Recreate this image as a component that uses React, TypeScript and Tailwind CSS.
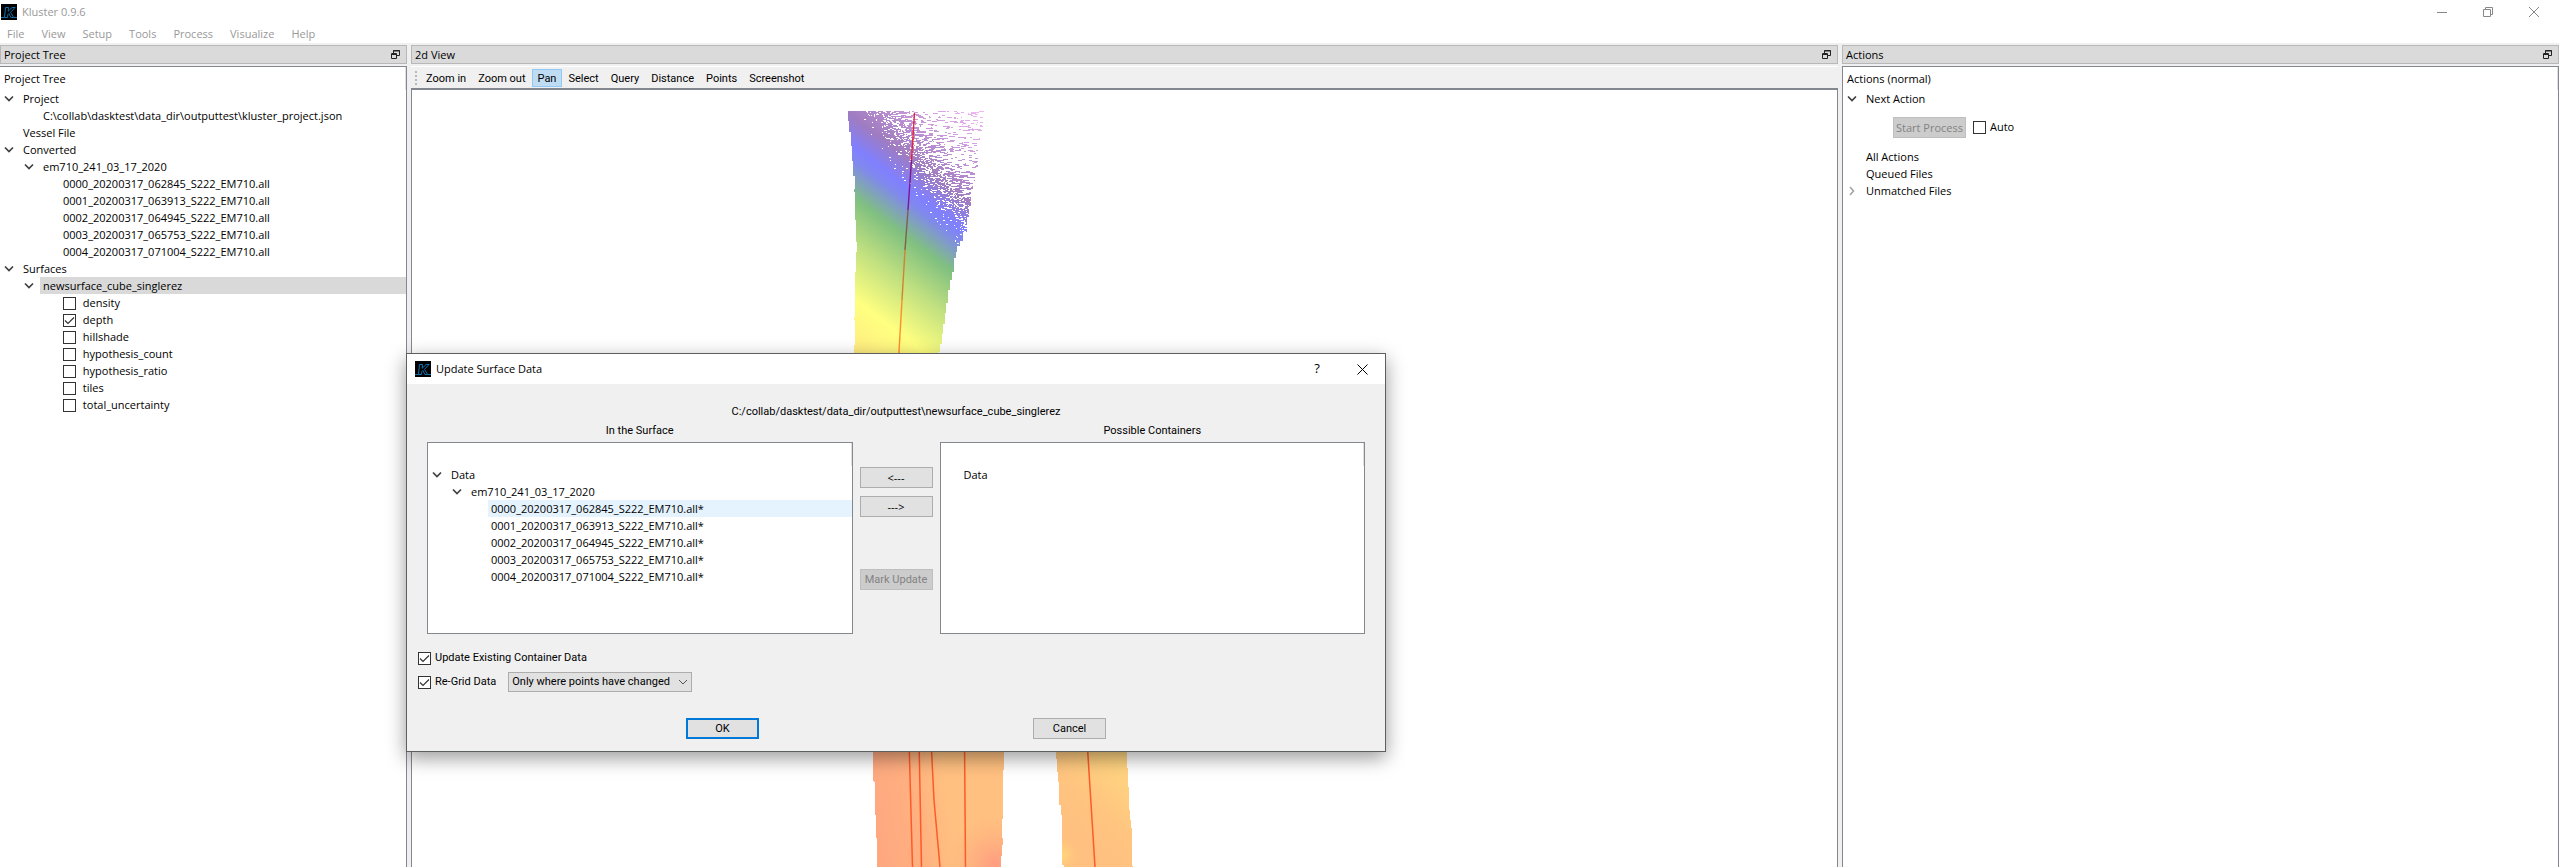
import type { ReactNode } from "react";

type Row = {
  label: string;
  level: number;
  open?: boolean;
  closed?: boolean;
  check?: boolean;
  checked?: boolean;
  selected?: boolean;
  hover?: boolean;
};

const files = [
  "0000_20200317_062845_S222_EM710.all",
  "0001_20200317_063913_S222_EM710.all",
  "0002_20200317_064945_S222_EM710.all",
  "0003_20200317_065753_S222_EM710.all",
  "0004_20200317_071004_S222_EM710.all",
];

const projectRows: Row[] = [
  { label: "Project", level: 0, open: true },
  { label: "C:\\collab\\dasktest\\data_dir\\outputtest\\kluster_project.json", level: 1 },
  { label: "Vessel File", level: 0 },
  { label: "Converted", level: 0, open: true },
  { label: "em710_241_03_17_2020", level: 1, open: true },
  ...files.map((label) => ({ label, level: 2 })),
  { label: "Surfaces", level: 0, open: true },
  { label: "newsurface_cube_singlerez", level: 1, open: true, selected: true },
  { label: "density", level: 2, check: true },
  { label: "depth", level: 2, check: true, checked: true },
  { label: "hillshade", level: 2, check: true },
  { label: "hypothesis_count", level: 2, check: true },
  { label: "hypothesis_ratio", level: 2, check: true },
  { label: "tiles", level: 2, check: true },
  { label: "total_uncertainty", level: 2, check: true },
];

const surfaceRows: Row[] = [
  { label: "Data", level: 0, open: true },
  { label: "em710_241_03_17_2020", level: 1, open: true },
  ...files.map((f, i) => ({ label: f + "*", level: 2, hover: i === 0 })),
];

const indent = ["pl-0", "pl-5", "pl-10"];

function Logo() {
  return (
    <svg className="size-4 shrink-0" viewBox="0 0 16 16" fill="none" aria-hidden="true">
      <rect width="16" height="16" fill="#000" />
      <path
        d="M0 13.500h3.500l1-10h3l-.4 3.800 4-3.800h3L9.500 8.300l3.200 5.200H16M3.500 13.500h3l.4-3 1-1 2 4h2.800"
        stroke="#1272ad"
      />
    </svg>
  );
}

function Chevron({ closed }: { closed?: boolean }) {
  return (
    <svg className="size-[10px]" viewBox="0 0 10 10" fill="none" aria-hidden="true">
      {closed ? (
        <path d="M3 1l3.500 4-3.500 4" stroke="#a0a0a0" strokeWidth="1.500" />
      ) : (
        <path d="M1 2.500l4 4 4-4" stroke="#404040" strokeWidth="1.700" />
      )}
    </svg>
  );
}

function Check({ label, checked }: { label: string; checked?: boolean }) {
  return (
    <label className="flex items-center gap-1">
      <span className="grid size-[13px] shrink-0">
        <input
          type="checkbox"
          defaultChecked={checked}
          className="peer col-start-1 row-start-1 m-0 size-[13px] appearance-none border border-[#333] bg-white"
        />
        <svg
          className="pointer-events-none invisible col-start-1 row-start-1 size-[13px] peer-checked:visible"
          viewBox="0 0 13 13"
          fill="none"
          aria-hidden="true"
        >
          <path d="M2 6.500l3 3 6-6" stroke="#333" strokeWidth="1.200" />
        </svg>
      </span>
      <span className="whitespace-pre">{label}</span>
    </label>
  );
}

function TreeRow({ row }: { row: Row }) {
  const tint = row.selected ? "bg-[#d9d9d9]" : row.hover ? "bg-[#e5f3ff]" : "";
  return (
    <li className={`flex h-[17px] items-center ${indent[row.level]}`}>
      <span className="flex w-5 shrink-0 justify-center pr-[2px]">
        {(row.open || row.closed) && <Chevron closed={row.closed} />}
      </span>
      <span className={`flex h-full grow items-center pt-px pl-[3px] ${tint}`}>
        {row.check ? <Check label={" " + row.label} checked={row.checked} /> : row.label}
      </span>
    </li>
  );
}

function Tree({ rows }: { rows: Row[] }) {
  return (
    <ul className="flex flex-col">
      {rows.map((row) => (
        <TreeRow key={row.label} row={row} />
      ))}
    </ul>
  );
}

function TreeHeader({ children }: { children?: ReactNode }) {
  return <div className="flex h-[23px] items-center border-r border-[#e0e0e0] pt-px pl-1">{children}</div>;
}

function DockTitle({ title }: { title: string }) {
  return (
    <div className="flex h-[19px] shrink-0 items-center justify-between border border-[#b8b8b8] bg-[#dadada] pr-[6px] pl-[3px]">
      <h2 className="pt-px">{title}</h2>
      <button type="button" aria-label={`Float ${title}`}>
        <svg className="size-[9px]" viewBox="0 0 9 9" fill="none" stroke="#222" aria-hidden="true">
          <path d="M.5 3.500h5v5h-5zM0 4.500h6M2.500 3V.5h6v5H6M2 1h7" />
        </svg>
      </button>
    </div>
  );
}

function PushButton({ children, disabled, primary }: { children: ReactNode; disabled?: boolean; primary?: boolean }) {
  const look = disabled
    ? "border border-[#bfbfbf] bg-[#cccccc] text-[#838383]"
    : primary
      ? "border-2 border-[#0078d7] bg-[#e1e1e1]"
      : "border border-[#adadad] bg-[#e1e1e1]";
  return (
    <button type="button" disabled={disabled} className={`h-[21px] w-[73px] pt-px whitespace-nowrap ${look}`}>
      {children}
    </button>
  );
}

/* White gaps over the sparse upper-right part of the sounding grid. */
function sparseGaps(): string {
  let seed = 71004;
  const rand = () => {
    seed = (seed * 1664525 + 1013904223) % 4294967296;
    return seed / 4294967296;
  };
  let d = "";
  for (let y = 111; y < 262; y++) {
    let x = 847;
    while (x < 988) {
      const dist = 0.787 * (x - 850) - 0.618 * (y - 103);
      const p = dist < -6 ? 0 : dist < 6 ? 0.03 : Math.min(0.8, 0.05 + dist / 74);
      const run = 1 + Math.floor(rand() * (dist > 30 ? 5 : 2));
      if (rand() < p) d += `M${x} ${y}h${run}v1h-${run}z`;
      x += run;
    }
  }
  return d;
}

const gaps = sparseGaps();

function SurfaceMap() {
  return (
    <svg
      className="block h-[777px] w-[800px] max-w-none"
      viewBox="412 90 800 777"
      shapeRendering="crispEdges"
      role="img"
      aria-label="Depth surface with track lines"
    >
      <defs>
        <linearGradient id="depth" gradientUnits="userSpaceOnUse" x1="980" y1="110" x2="818" y2="326">
          <stop offset="0" stopColor="#f4b8f6" />
          <stop offset="0.3" stopColor="#a07cc0" />
          <stop offset="0.39" stopColor="#8080ff" />
          <stop offset="0.43" stopColor="#8088ee" />
          <stop offset="0.54" stopColor="#80c080" />
          <stop offset="0.68" stopColor="#c0e080" />
          <stop offset="0.84" stopColor="#ffff80" />
          <stop offset="0.9" stopColor="#fff880" />
          <stop offset="1" stopColor="#ffea80" />
        </linearGradient>
        <linearGradient id="west" gradientUnits="userSpaceOnUse" x1="873" y1="800" x2="1004" y2="780">
          <stop offset="0" stopColor="#ffa880" />
          <stop offset="0.3" stopColor="#ffb080" />
          <stop offset="0.55" stopColor="#ffc080" />
          <stop offset="1" stopColor="#ffc080" />
        </linearGradient>
        <radialGradient id="shoal" gradientUnits="userSpaceOnUse" cx="995" cy="864" r="48">
          <stop offset="0" stopColor="#ff9c80" />
          <stop offset="1" stopColor="#ffb080" stopOpacity="0" />
        </radialGradient>
        <linearGradient id="east" gradientUnits="userSpaceOnUse" x1="1070" y1="830" x2="1125" y2="770">
          <stop offset="0" stopColor="#ffc080" />
          <stop offset="0.4" stopColor="#ffc480" />
          <stop offset="1" stopColor="#ffd480" />
        </linearGradient>
        <radialGradient id="deep" gradientUnits="userSpaceOnUse" cx="1062" cy="855" r="18">
          <stop offset="0" stopColor="#ffd878" />
          <stop offset="1" stopColor="#ffc880" stopOpacity="0" />
        </radialGradient>
      </defs>
      <path
        fill="url(#depth)"
        d="M848 111H984V122H983V138H980V150H978V170H975V182H973V190H971V206H969V218H967V232H963V241H960V246H957V252H956V258H954V272H952V280H950V290H948V303H946V313H945V324H943V334H942V344H940V352H938V360H854V345H855V320H854V317H855V272H856V252H857V242H856V220H855V192H854V189H855V176H853V161H852V146H851V132H849V121H848Z"
      />
      <path fill="#fff" d={gaps} />
      <path
        fill="url(#west)"
        d="M873 740H1004V770H1003V819H1002V838H1003V845H1002V856H1001V867H877V838H876V815H875V782H874V781H873Z"
      />
      <path fill="url(#shoal)" d="M940 800H1003V819H1002V838H1003V845H1002V856H1001V867H940Z" />
      <path
        fill="url(#east)"
        d="M1056 740H1127V768H1128V787H1129V810H1130V820H1131V828H1132V866H1133V867H1064V865H1062V815H1061V805H1059V782H1058V772H1057V759H1056Z"
      />
      <path fill="url(#deep)" d="M1062 835H1082V867H1064V865H1062Z" />
      <g fill="none" shapeRendering="auto">
        <path d="M914.500 113L911.500 160" stroke="#e8203c" strokeWidth="1.400" />
        <path d="M911.500 160L908 210" stroke="#7c1890" strokeWidth="1.400" />
        <path d="M908 210L905 250" stroke="#80604c" strokeWidth="1.400" />
        <path d="M905 250L902 300" stroke="#d08430" strokeWidth="1.400" />
        <path d="M902 300L898.500 360" stroke="#ff8c28" strokeWidth="1.400" />
        <path
          d="M909 740L912.500 867M919 740L921.500 867M931 740L934 800L940 867M964.500 740L965.500 867M1087 740L1095 867"
          stroke="#ff5a28"
          strokeWidth="1.500"
        />
      </g>
    </svg>
  );
}

const tools = ["Zoom in", "Zoom out", "Pan", "Select", "Query", "Distance", "Points", "Screenshot"];
const menus = ["File", "View", "Setup", "Tools", "Process", "Visualize", "Help"];

function UpdateDialog() {
  return (
    <section
      role="dialog"
      aria-label="Update Surface Data"
      className="absolute top-[353px] left-[406px] flex w-[980px] flex-col border border-[#5c5f60] bg-[#f0f0f0] font-[Roboto,sans-serif] shadow-[0_6px_18px_rgba(0,0,0,0.4)]"
    >
      <header className="flex h-[30px] items-center bg-white pl-2 font-['Open_Sans',sans-serif]">
        <Logo />
        <h2 className="grow pl-[5px]">Update Surface Data</h2>
        <button type="button" aria-label="Help" className="w-[45px] pl-px text-center text-[13px]">
          ?
        </button>
        <button type="button" aria-label="Close" className="flex w-[46px] justify-center">
          <svg className="size-[11px]" viewBox="0 0 11 11" stroke="#000" aria-hidden="true">
            <path d="M.5.5l10 10M10.500.5l-10 10" />
          </svg>
        </button>
      </header>
      <div className="flex flex-col px-[20px] pt-[18px]">
        <p className="text-center leading-[19px]">C:/collab/dasktest/data_dir/outputtest\newsurface_cube_singlerez</p>
        <div className="flex">
          <div className="flex flex-1 flex-col">
            <h3 className="pb-[2px] text-center leading-[19px]">In the Surface</h3>
            <div className="h-[192px] border border-[#828790] bg-white font-['Open_Sans',sans-serif]">
              <TreeHeader />
              <Tree rows={surfaceRows} />
            </div>
          </div>
          <div className="flex w-[87px] flex-col items-center gap-2 pt-[46px]">
            <div className="flex flex-col gap-2 font-['Open_Sans',sans-serif]">
              <PushButton>{"<---"}</PushButton>
              <PushButton>{"--->"}</PushButton>
            </div>
            <div className="pt-[44px]">
              <PushButton disabled>Mark Update</PushButton>
            </div>
          </div>
          <div className="flex flex-1 flex-col">
            <h3 className="pb-[2px] text-center leading-[19px]">Possible Containers</h3>
            <div className="h-[192px] border border-[#828790] bg-white font-['Open_Sans',sans-serif]">
              <TreeHeader />
              <Tree rows={[{ label: "Data", level: 0 }]} />
            </div>
          </div>
        </div>
      </div>
      <div className="flex flex-col gap-[2px] px-[11px] pt-[13px]">
        <div className="flex h-[22px] items-center">
          <Check label="Update Existing Container Data" checked />
        </div>
        <div className="flex h-[22px] items-center gap-3">
          <Check label="Re-Grid Data" checked />
          <div className="grid items-center">
            <select
              aria-label="Re-grid mode"
              className="col-start-1 row-start-1 h-[20px] w-[184px] appearance-none border border-[#adadad] bg-[#e1e1e1] pt-px pl-[3px]"
            >
              <option>Only where points have changed</option>
              <option>The entire grid</option>
            </select>
            <svg
              className="pointer-events-none col-start-1 row-start-1 mr-1 size-[10px] justify-self-end"
              viewBox="0 0 10 10"
              fill="none"
              aria-hidden="true"
            >
              <path d="M1 3l4 4 4-4" stroke="#555" />
            </svg>
          </div>
        </div>
      </div>
      <footer className="flex justify-center gap-[274px] pt-[25px] pb-[12px]">
        <PushButton primary>OK</PushButton>
        <PushButton>Cancel</PushButton>
      </footer>
    </section>
  );
}

export default function App() {
  return (
    <div className="relative flex min-h-screen flex-col overflow-hidden bg-[#f0f0f0] font-['Open_Sans',sans-serif] text-[11px] text-black">
      <header className="bg-white text-[#999]">
        <div className="flex h-6 items-center pl-px">
          <Logo />
          <h1 className="grow pl-[5px]">Kluster 0.9.6</h1>
          <div className="flex pr-[2px]">
            <button type="button" aria-label="Minimize" className="flex w-[46px] justify-center">
              <svg className="size-[10px]" viewBox="0 0 10 10" stroke="#888" aria-hidden="true">
                <path d="M0 5.500h10" />
              </svg>
            </button>
            <button type="button" aria-label="Restore" className="flex w-[46px] justify-center">
              <svg className="size-[10px]" viewBox="0 0 10 10" fill="none" stroke="#888" aria-hidden="true">
                <path d="M.5 2.500h7v7h-7zM2.500 2.500v-2h7v7h-2" />
              </svg>
            </button>
            <button type="button" aria-label="Close window" className="flex w-[46px] justify-center">
              <svg className="size-[10px]" viewBox="0 0 10 10" stroke="#888" aria-hidden="true">
                <path d="M0 0l10 10M10 0L0 10" />
              </svg>
            </button>
          </div>
        </div>
        <nav className="flex h-[19px] items-center gap-[17px] pt-px pl-[7px]">
          {menus.map((m) => (
            <button type="button" key={m}>
              {m}
            </button>
          ))}
        </nav>
      </header>
      <main className="flex grow gap-1 pt-[2px]">
        <aside className="flex w-[407px] shrink-0 flex-col gap-[2px]">
          <DockTitle title="Project Tree" />
          <div className="grow border-t border-r border-[#828790] bg-white">
            <TreeHeader>Project Tree</TreeHeader>
            <Tree rows={projectRows} />
          </div>
        </aside>
        <section className="flex min-w-0 grow flex-col gap-[2px]">
          <DockTitle title="2d View" />
          <div className="flex grow flex-col">
            <div className="flex h-[22px] items-center border-t border-white pl-1 font-[Roboto,sans-serif]">
              <span className="mr-[3px] h-[14px] w-[2px] border-l-2 border-dotted border-[#b8b8b8]" />
              {tools.map((t) => (
                <button
                  type="button"
                  key={t}
                  className={`h-[18px] border px-[5px] pt-px ${t === "Pan" ? "border-[#90c8f6] bg-[#c0dcf3]" : "border-transparent"}`}
                >
                  {t}
                </button>
              ))}
            </div>
            <div className="grow overflow-hidden border-x border-t-2 border-[#828790] bg-white">
              <SurfaceMap />
            </div>
          </div>
        </section>
        <aside className="flex w-[717px] shrink-0 flex-col gap-[2px]">
          <DockTitle title="Actions" />
          <div className="grow border-x border-t border-[#828790] bg-white">
            <TreeHeader>Actions (normal)</TreeHeader>
            <Tree rows={[{ label: "Next Action", level: 0, open: true }]} />
            <div className="flex h-[41px] items-center gap-[7px] pl-[50px]">
              <PushButton disabled>Start Process</PushButton>
              <Check label="Auto" />
            </div>
            <Tree
              rows={[
                { label: "All Actions", level: 0 },
                { label: "Queued Files", level: 0 },
                { label: "Unmatched Files", level: 0, closed: true },
              ]}
            />
          </div>
        </aside>
      </main>
      <UpdateDialog />
    </div>
  );
}
